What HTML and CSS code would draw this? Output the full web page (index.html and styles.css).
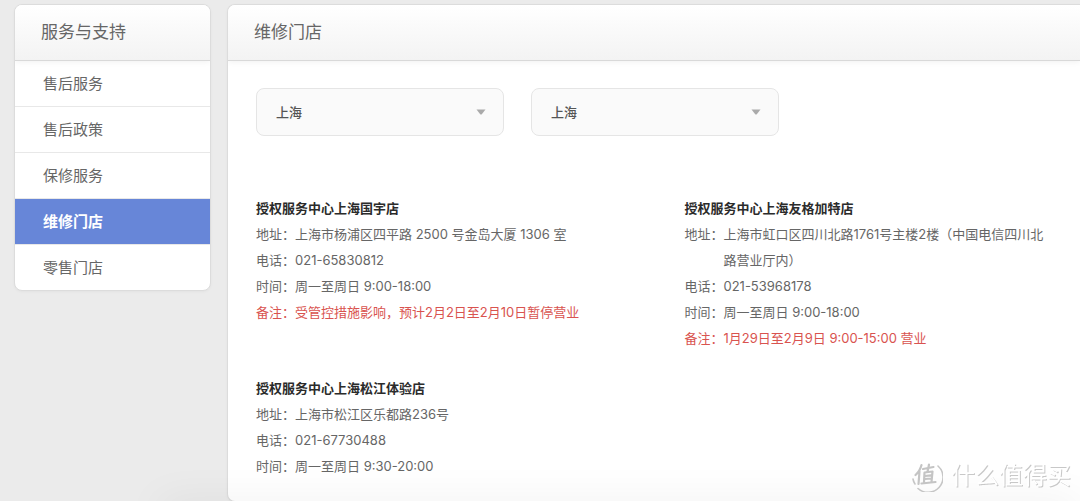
FILE: index.html
```html
<!DOCTYPE html>
<html lang="zh-CN">
<head>
<meta charset="utf-8">
<title>维修门店</title>
<link rel="stylesheet" href="styles.css">
</head>
<body>
<div class="page">
  <aside class="card sidebar">
    <h2 class="card-head">服务与支持</h2>
    <nav class="menu">
      <a class="menu-item" href="#service">售后服务</a>
      <a class="menu-item" href="#policy">售后政策</a>
      <a class="menu-item" href="#warranty">保修服务</a>
      <a class="menu-item active" href="#repair" aria-current="page">维修门店</a>
      <a class="menu-item" href="#retail">零售门店</a>
    </nav>
  </aside>
  <main class="card panel">
    <h1 class="card-head">维修门店</h1>
    <div class="panel-body">
      <form class="filters">
        <div class="picker">
          <select class="picker-select" aria-label="省份"><option>上海</option></select>
          <svg class="picker-arrow" viewBox="0 0 10 6" aria-hidden="true"><path d="M0.5 0.5H9.5L6 5Q5 6 4 5Z"/></svg>
        </div>
        <div class="picker">
          <select class="picker-select" aria-label="城市"><option>上海</option></select>
          <svg class="picker-arrow" viewBox="0 0 10 6" aria-hidden="true"><path d="M0.5 0.5H9.5L6 5Q5 6 4 5Z"/></svg>
        </div>
      </form>
      <div class="stores">
        <section class="store">
          <h3 class="store-name">授权服务中心上海国宇店</h3>
          <dl class="info">
            <dt>地址：</dt><dd>上海市杨浦区四平路 2500 号金岛大厦 1306 室</dd>
            <dt>电话：</dt><dd>021-65830812</dd>
            <dt>时间：</dt><dd>周一至周日 9:00-18:00</dd>
            <dt class="note">备注：</dt><dd class="note">受管控措施影响，预计2月2日至2月10日暂停营业</dd>
          </dl>
        </section>
        <section class="store">
          <h3 class="store-name">授权服务中心上海友格加特店</h3>
          <dl class="info">
            <dt>地址：</dt><dd>上海市虹口区四川北路1761号主楼2楼（中国电信四川北路营业厅内）</dd>
            <dt>电话：</dt><dd>021-53968178</dd>
            <dt>时间：</dt><dd>周一至周日 9:00-18:00</dd>
            <dt class="note">备注：</dt><dd class="note">1月29日至2月9日 9:00-15:00 营业</dd>
          </dl>
        </section>
        <section class="store">
          <h3 class="store-name">授权服务中心上海松江体验店</h3>
          <dl class="info">
            <dt>地址：</dt><dd>上海市松江区乐都路236号</dd>
            <dt>电话：</dt><dd>021-67730488</dd>
            <dt>时间：</dt><dd>周一至周日 9:30-20:00</dd>
          </dl>
        </section>
      </div>
    </div>
  </main>
</div>
<div class="bottom-shade"></div>
<div class="watermark">
  <svg class="watermark-logo" viewBox="0 0 32 32" aria-hidden="true">
    <g fill="none" stroke-linecap="round" stroke-linejoin="round">
      <path stroke="#c6c6c6" stroke-width="1.600" d="M27 6A14 14 0 0 1 7 28.500M4 24Q2.500 22 2 19"/>
      <g stroke="#c4c4c4" stroke-width="2.200">
        <path d="M10.500 5Q9 11 4.500 15M8.500 11.500L7.500 24"/>
        <path d="M12 9L22.500 7M18 4.500L16.500 12"/>
        <path d="M13.500 12.500L21.500 11.500L20.500 22M13.500 12.500L13 22M14 16L20 15.300M14 19L20 18.500"/>
        <path d="M10.500 23.500L24.500 22"/>
      </g>
    </g>
  </svg>
  <span>什么值得买</span>
</div>
</body>
</html>
```
FILE: styles.css
```css
* { box-sizing: border-box; }

body {
  margin: 0;
  overflow: hidden;
  background: #ebebeb;
  color: #666;
  font: 13px/26px Inter, "Noto Sans CJK SC", sans-serif;
}

h1, h2, h3, dl, dd { margin: 0; }

.page {
  display: flex;
  align-items: flex-start;
  gap: 16px;
  padding: 4px 0 0 14px;
}

.card {
  overflow: hidden;
  background: #fff;
  border: 1px solid #dcdcdc;
  border-radius: 8px;
  box-shadow: 0 1px 3px rgba(0, 0, 0, 0.04);
}

.sidebar { flex: 0 0 197px; }

.panel {
  flex: 1;
  border-right: 0;
  border-radius: 8px 0 0 8px;
}

.card-head {
  padding: 0 26px;
  border-bottom: 1px solid #d9d9d9;
  background: linear-gradient(#fff, #f3f3f3);
  box-shadow: 0 1px 6px rgba(0, 0, 0, 0.06);
  font-size: 17px;
  font-weight: 400;
  line-height: 55px;
}

.menu-item {
  display: block;
  height: 46px;
  padding-left: 28px;
  border-bottom: 1px solid #e8e8e8;
  color: #666;
  font-size: 15px;
  line-height: 46px;
  text-decoration: none;
}

.menu-item:last-child { height: 45px; border-bottom: 0; }

.menu-item.active {
  background: #6786d8;
  color: #fff;
  font-weight: 700;
}

.panel-body { padding: 27px 0 22px 28px; }

.filters { display: flex; gap: 27px; }

.picker { position: relative; width: 248px; }

.picker-select {
  display: block;
  width: 100%;
  height: 48px;
  padding: 0 40px 0 19px;
  border: 1px solid #e5e5e5;
  border-radius: 8px;
  background: #fafafa;
  color: #555;
  font: inherit;
  font-weight: 500;
  appearance: none;
}

.picker-arrow {
  position: absolute;
  top: 21px;
  right: 18px;
  width: 10px;
  height: 6px;
  fill: #aaa;
  pointer-events: none;
}

.stores {
  display: grid;
  grid-template-columns: 52% 1fr;
  row-gap: 24px;
  margin-top: 59px;
}

.store { padding-right: 24px; }

.store-name {
  color: #2b2b2b;
  font-size: 13px;
  font-weight: 700;
}

.info {
  display: grid;
  grid-template-columns: 39px 1fr;
}

.note { color: #d9534f; }

.bottom-shade {
  position: fixed;
  right: 0;
  bottom: -20px;
  left: 160px;
  height: 16px;
  box-shadow: 0 0 40px rgba(0, 0, 0, 0.1);
  pointer-events: none;
}

.watermark {
  position: fixed;
  right: 9px;
  bottom: 9px;
  display: flex;
  align-items: center;
  gap: 8px;
  color: #fff;
  font-size: 24px;
  line-height: 32px;
  text-shadow: 1px 1px 0 #c8c8c8;
  pointer-events: none;
}

.watermark-logo {
  width: 32px;
  height: 32px;
}
```
